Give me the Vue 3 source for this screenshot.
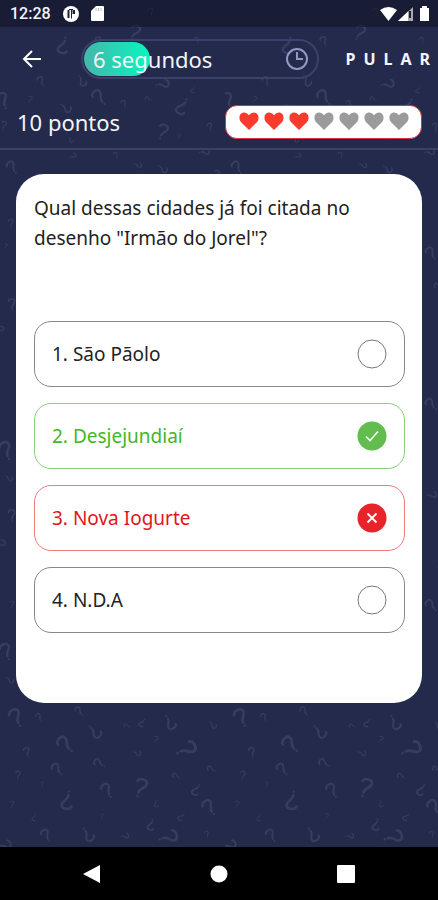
<script setup>
import { ref } from 'vue'

const lives = 3
const maxLives = 7
const progress = 28
const chosen = ref(null)
const answers = [
  { text: '1. São Pãolo', state: 'plain' },
  { text: '2. Desjejundiaí', state: 'right' },
  { text: '3. Nova Iogurte', state: 'wrong' },
  { text: '4. N.D.A', state: 'plain' }
]

// Question marks of the wallpaper tile: x, y, rotation, scale
const marks = [
  [135, 32, 20, 9], [63, 46, 190, 10], [99, 41, -30, 6], [151, 12, -20, 5], [197, 40, -30, 4],
  [99, 97, -45, 10], [3, 100, -25, 10], [41, 81, -30, 6], [82, 81, 145, 7], [163, 84, 75, 8],
  [30, 99, 15, 4], [66, 108, 120, 7], [124, 104, -30, 5], [148, 99, -70, 4], [182, 107, 205, 10],
  [163, 131, 15, 9], [193, 90, 200, 4], [210, 127, -20, 5], [4, 125, 10, 5], [71, 140, 140, 4],
  [179, 136, 10, 3], [12, 167, -40, 8], [73, 156, 60, 4], [116, 155, -30, 4], [138, 165, 100, 5],
  [163, 169, 120, 6], [205, 152, 80, 6], [217, 174, 0, 5],
  [11, 223, -10, 5], [206, 253, -40, 8], [6, 246, 20, 3], [12, 304, -10, 7], [213, 286, -80, 5],
  [206, 404, -50, 8], [1, 330, 30, 5], [6, 450, -25, 11], [9, 478, 120, 5], [207, 495, 80, 6],
  [12, 515, -10, 7], [1, 544, 50, 6], [206, 605, -50, 8], [12, 604, 0, 4], [216, 568, 100, 4],
  [6, 651, -25, 10], [10, 680, 120, 5],
  [16, 717, -30, 11], [39, 717, -35, 5], [79, 711, -45, 6], [95, 732, 130, 9], [65, 744, -50, 11],
  [27, 752, -20, 6], [57, 769, -45, 8], [99, 763, -65, 7], [142, 723, 210, 5], [170, 723, 145, 9],
  [127, 726, -80, 4], [137, 753, 100, 5], [187, 749, 60, 12], [156, 739, 20, 4], [213, 725, 130, 5],
  [18, 775, 0, 5], [67, 801, 185, 11], [107, 790, -35, 9], [141, 787, 15, 11], [196, 790, 205, 7],
  [209, 807, -40, 10], [42, 784, 0, 3], [176, 776, -70, 5], [12, 804, 0, 4], [34, 818, 190, 4],
  [46, 835, -35, 8], [88, 835, 140, 9], [125, 836, 80, 5], [151, 825, 190, 7], [169, 837, 70, 11],
  [181, 817, 220, 5], [156, 804, 170, 4], [207, 834, -20, 4], [102, 816, 0, 3], [5, 845, 70, 8], [211, 769, -70, 5]
]
</script>

<template>
  <div class="screen">
    <svg class="wallpaper" aria-hidden="true">
      <defs>
        <pattern id="marks" width="225" height="850" patternUnits="userSpaceOnUse">
          <g v-for="(m, i) in marks" :key="i" :transform="`translate(${m[0]} ${m[1]}) rotate(${m[2]}) scale(${m[3] / 11})`">
            <path d="M-5-5C-4-9 5-9 5-4C5 0-1 1-1 6" fill="none" stroke="#373d60" stroke-width="2.5" stroke-linecap="round" />
            <circle cx="-1" cy="9.500" r="1.200" fill="#373d60" />
          </g>
        </pattern>
      </defs>
      <rect width="100%" height="100%" fill="url(#marks)" />
    </svg>

    <div class="status">
      <span class="clock">12:28</span>
      <svg width="16" height="16" viewBox="0 0 16 16"><circle cx="8" cy="8" r="8" fill="#fff" /><path d="M4.500 4h2v8h-2zM9.500 4h2.500v4H9.500z" fill="#1b1f38" /><path d="M6 3.500h4M8.500 3.500v9" fill="none" stroke="#1b1f38" /></svg>
      <svg class="card-icon" width="13" height="16" viewBox="0 0 13 16"><path d="M5 0h7q1 0 1 1v13q0 1-1 1H1q-1 0-1-1V5z" fill="#fff" /><path d="M5 2v3M7.500 2v3M10 2v3" stroke="#bbb" /></svg>
      <span class="spring"></span>
      <svg width="50" height="16" viewBox="0 0 50 16"><path d="M0 4Q8.500-2 17 4L8.500 15z" fill="#fff" /><path d="M18 15L33 1v14z" fill="#aaa" /><path d="M18 15L28 5.500V15z" fill="#fff" /><path d="M30 5v7" stroke="#1b1f38" stroke-width="2" /><path d="M40 2h2V0h5v2h2v13h-9z" fill="#fff" /></svg>
    </div>

    <header class="top">
      <button class="back" aria-label="Voltar">
        <svg width="20" height="20" viewBox="0 0 20 20"><path d="M19 10H2M10 2L2 10l8 8" fill="none" stroke="#fff" stroke-width="2" /></svg>
      </button>
      <div class="timer">
        <div class="fill" :style="{ width: progress + '%' }"></div>
        <span class="seconds">6 segundos</span>
        <svg width="24" height="24" viewBox="0 0 24 24"><circle cx="12" cy="12" r="10" fill="none" stroke="#9298c5" stroke-width="2" /><path d="M12 5v7h6" fill="none" stroke="#9298c5" stroke-width="2" /></svg>
      </div>
      <button class="skip">PULAR</button>
    </header>

    <div class="score">
      <span>10 pontos</span>
      <div class="lives">
        <svg v-for="n in maxLives" :key="n" width="20" height="19" viewBox="0 0 21 19"><path d="M10.500 18.500L2 10C-1 6 .500 0 5.500 0Q8.500 0 10.500 3Q12.500 0 15.500 0C20.500 0 22 6 19 10z" :fill="n <= lives ? '#f83b2c' : '#9b9b9b'" /></svg>
      </div>
    </div>

    <main class="card">
      <h1>Qual dessas cidades já foi citada no desenho "Irmão do Jorel"?</h1>
      <div class="answers">
        <label v-for="(a, i) in answers" :key="i" class="answer" :class="a.state">
          <span>{{ a.text }}</span>
          <input v-model="chosen" type="radio" name="answer" :value="i">
          <svg v-if="a.state === 'plain'" width="30" height="30" viewBox="0 0 30 30"><circle cx="15" cy="15" r="14" fill="#fff" stroke="#777" /></svg>
          <svg v-else-if="a.state === 'right'" width="30" height="30" viewBox="0 0 30 30"><circle cx="15" cy="15" r="14.500" fill="#62bd4f" /><path d="M9 15.500l4 4 8-9" fill="none" stroke="#fff" stroke-width="1.600" /></svg>
          <svg v-else width="30" height="30" viewBox="0 0 30 30"><circle cx="15" cy="15" r="14.500" fill="#e8242b" /><path d="M10.500 10.500l9 9M19.500 10.500l-9 9" stroke="#fff" stroke-width="1.800" /></svg>
        </label>
      </div>
    </main>

    <nav class="system">
      <button aria-label="Voltar"><svg width="18" height="20" viewBox="0 0 18 20"><path d="M0 10L17 1v18z" fill="#fff" /></svg></button>
      <button aria-label="Início"><svg width="18" height="18" viewBox="0 0 18 18"><circle cx="9" cy="9" r="8.500" fill="#fff" /></svg></button>
      <button aria-label="Recentes"><svg width="18" height="18" viewBox="0 0 18 18"><rect width="18" height="18" rx="1" fill="#fff" /></svg></button>
    </nav>
  </div>
</template>

<style>
body { background: #000; }
</style>

<style scoped>
* { box-sizing: border-box; }
.screen {
  position: relative;
  display: flex;
  flex-direction: column;
  min-height: 100vh;
  background: #242a4b;
  color: #f4f4fa;
  font-family: "Noto Sans", "Open Sans", sans-serif;
}
.wallpaper { position: absolute; inset: 0; width: 100%; height: 100%; }
.screen > :not(.wallpaper) { position: relative; }
svg { display: block; flex: none; }
button { padding: 0; border: 0; background: none; color: inherit; font: inherit; }
.status {
  display: flex;
  align-items: center;
  gap: 12px;
  height: 27px;
  padding: 0 8px 0 10px;
  background: rgba(17, 20, 38, 0.6);
}
.clock { font: 500 16px Roboto, sans-serif; }
.spring { flex: 1; }
.top {
  display: flex;
  align-items: center;
  height: 64px;
  padding-left: 22px;
}
.timer {
  position: relative;
  display: flex;
  flex: 1;
  align-items: center;
  justify-content: space-between;
  height: 40px;
  margin-left: 39px;
  padding: 0 8px 0 10px;
  border: 2px solid #3b4168;
  border-radius: 20px;
}
.fill {
  position: absolute;
  inset: 1px auto 1px 1px;
  border-radius: 17px;
  background: linear-gradient(90deg, #46b6a8, #06f6bf);
}
.seconds { position: relative; font-size: 22px; }
.skip {
  margin-left: 26px;
  font-size: 16px;
  font-weight: 700;
  letter-spacing: 8px;
}
.score {
  display: flex;
  align-items: center;
  justify-content: space-between;
  height: 59px;
  padding: 4px 16px 0 17px;
  border-bottom: 2px solid #3b4162;
  font-size: 22px;
}
.lives {
  display: flex;
  align-items: center;
  justify-content: center;
  gap: 5px;
  height: 34px;
  padding: 0 12px 0 13px;
  border: 1px solid #dc3040;
  border-radius: 12px;
  background: #fff;
}
.card {
  margin: 24px 16px 0;
  padding: 19px 17px 70px 18px;
  border-radius: 28px;
  background: #fff;
  color: #222;
}
h1 {
  min-height: 128px;
  margin: 0;
  font-size: 19px;
  font-weight: 400;
  line-height: 30px;
}
.answers { display: grid; gap: 16px; }
.answer {
  display: flex;
  align-items: center;
  justify-content: space-between;
  height: 66px;
  padding: 0 17px;
  border: 1px solid #888;
  border-radius: 17px;
  font-size: 19px;
}
.answer input { position: absolute; opacity: 0; }
.right { border-color: #8bce80; color: #43b629; }
.wrong { border-color: #ee7b7b; color: #e3141b; }
.system {
  display: flex;
  align-items: center;
  justify-content: space-around;
  height: 53px;
  margin-top: auto;
  padding: 0 29px;
  background: #000;
}
</style>
